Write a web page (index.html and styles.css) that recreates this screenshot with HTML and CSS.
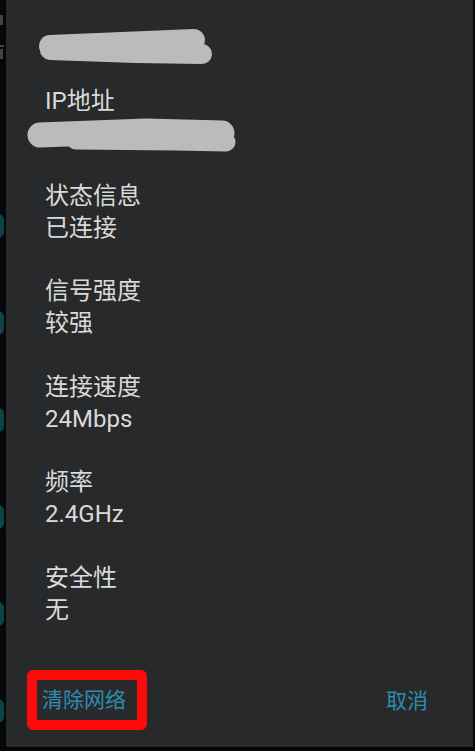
FILE: index.html
```html
<!DOCTYPE html>
<html lang="zh">
<head>
<meta charset="utf-8">
<title>WLAN</title>
<link rel="stylesheet" href="styles.css">
</head>
<body>
<div class="screen">
  <div class="edge">
    <span class="glyph g1"></span>
    <span class="glyph g2"></span>
    <span class="glyph g3"></span>
    <div class="marks">
      <span class="mark"></span>
      <span class="mark"></span>
      <span class="mark"></span>
      <span class="mark"></span>
      <span class="mark"></span>
      <span class="mark"></span>
    </div>
  </div>
  <div class="dialog">
    <div class="title">
      <svg class="scribble s1" width="180" height="36" viewBox="0 0 180 36">
        <g fill="none" stroke="#bbbbbb" stroke-linecap="round" stroke-linejoin="round">
          <path d="M14 17 L158 11" stroke-width="22"/>
          <path d="M14 21 L100 24 L166 25" stroke-width="20"/>
          <path d="M80 11 L152 8" stroke-width="13"/>
        </g>
      </svg>
    </div>
    <div class="content">
      <div class="item">
        <div class="label">IP地址</div>
        <div class="value"><svg class="scribble s2" width="212" height="36" viewBox="0 0 212 36">
          <g fill="none" stroke="#bbbbbb" stroke-linecap="round" stroke-linejoin="round">
            <path d="M14 19 L120 15 L196 17" stroke-width="25"/>
            <path d="M50 24 L150 25 L200 26" stroke-width="19"/>
            <path d="M196 18 L203 27" stroke-width="12"/>
          </g>
        </svg></div>
      </div>
      <div class="item">
        <div class="label">状态信息</div>
        <div class="value">已连接</div>
      </div>
      <div class="item">
        <div class="label">信号强度</div>
        <div class="value">较强</div>
      </div>
      <div class="item">
        <div class="label">连接速度</div>
        <div class="value">24Mbps</div>
      </div>
      <div class="item">
        <div class="label">频率</div>
        <div class="value">2.4GHz</div>
      </div>
      <div class="item">
        <div class="label">安全性</div>
        <div class="value">无</div>
      </div>
    </div>
    <div class="actions">
      <button class="btn btn-forget">清除网络</button>
      <button class="btn btn-cancel">取消</button>
    </div>
  </div>
</div>
</body>
</html>
```
FILE: styles.css
```css
* { box-sizing: border-box; }
html, body {
  margin: 0;
  padding: 0;
  background: #050708;
}
body {
  width: 475px;
  height: 751px;
  overflow: hidden;
  font-family: Roboto, "Noto Sans CJK SC", sans-serif;
}
.screen {
  display: flex;
  width: 475px;
  height: 751px;
}
.edge {
  width: 6px;
  flex: none;
  display: flex;
  flex-direction: column;
  overflow: hidden;
}
.glyph {
  display: block;
  width: 4px;
  background: #6a6c6e;
  opacity: 0.6;
}
.g1 { height: 10px; margin-top: 15px; width: 3px; }
.g2 { height: 2px; margin-top: 20px; }
.g3 { height: 10px; margin-top: 2px; width: 3px; }
.marks {
  display: flex;
  flex-direction: column;
  gap: 73px;
  margin-top: 155px;
}
.mark {
  display: block;
  width: 6px;
  height: 24px;
  margin-left: -2px;
  border-radius: 0 12px 12px 0;
  background: #0c444a;
}
.dialog {
  flex: 1;
  height: 747px;
  margin-right: 2px;
  background: #28292b;
  display: flex;
  flex-direction: column;
}
.title {
  height: 36px;
  margin-top: 29px;
  margin-bottom: 20px;
  padding-left: 30px;
}
.scribble { display: block; }
.content {
  padding-left: 39px;
  color: #dadada;
  font-size: 24px;
}
.item { margin-bottom: 31.5px; }
.item:last-child { margin-bottom: 0; }
.label, .value {
  height: 32px;
  line-height: 32px;
  white-space: nowrap;
}
.s2 { margin-left: -19px; margin-top: -1px; }
.actions {
  margin-top: auto;
  padding: 0 45px 17px 21px;
  display: flex;
  justify-content: space-between;
  align-items: center;
}
.btn {
  font-family: Roboto, "Noto Sans CJK SC", sans-serif;
  font-size: 21px;
  color: #2d8db0;
  background: none;
  border: none;
  padding: 0;
  line-height: 40px;
  cursor: pointer;
}
.btn-forget {
  border: 10px solid #ff0a0a;
  border-radius: 6px;
  padding: 0 11px 0 5px;
}
.btn-cancel {
  margin-top: 2px;
}
```
